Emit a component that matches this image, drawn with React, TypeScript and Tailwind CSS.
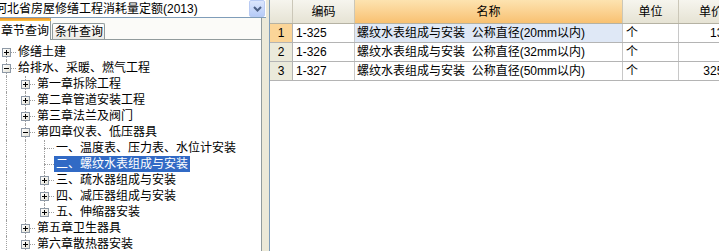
import React from "react";

type TreeNode = {
  label: string;
  open?: boolean;
  plus?: boolean;
  selected?: boolean;
  kids?: TreeNode[];
};

type FlatRow = {
  node: TreeNode;
  guides: boolean[];
  last: boolean;
  first: boolean;
};

const tree: TreeNode[] = [
  { label: "修缮土建", plus: true },
  {
    label: "给排水、采暖、燃气工程",
    open: true,
    kids: [
      { label: "第一章拆除工程", plus: true },
      { label: "第二章管道安装工程", plus: true },
      { label: "第三章法兰及阀门", plus: true },
      {
        label: "第四章仪表、低压器具",
        open: true,
        kids: [
          { label: "一、温度表、压力表、水位计安装" },
          { label: "二、螺纹水表组成与安装", selected: true },
          { label: "三、疏水器组成与安装", plus: true },
          { label: "四、减压器组成与安装", plus: true },
          { label: "五、伸缩器安装", plus: true },
        ],
      },
      { label: "第五章卫生器具", plus: true },
      { label: "第六章散热器安装", plus: true },
      { label: "第七章采暖工程", plus: true },
    ],
  },
  { label: "电气工程", plus: true },
];

const flatten = (nodes: TreeNode[], guides: boolean[], out: FlatRow[]) => {
  nodes.forEach((n, i) => {
    const last = i === nodes.length - 1;
    out.push({ node: n, guides, last, first: guides.length === 0 && i === 0 });
    if (n.open && n.kids) flatten(n.kids, [...guides, !last], out);
  });
  return out;
};

const rows = [
  { no: "1", code: "1-325", name: "螺纹水表组成与安装  公称直径(20mm以内)", unit: "个", price: "13.58" },
  { no: "2", code: "1-326", name: "螺纹水表组成与安装  公称直径(32mm以内)", unit: "个", price: "7.6" },
  { no: "3", code: "1-327", name: "螺纹水表组成与安装  公称直径(50mm以内)", unit: "个", price: "325.06" },
];

const font = "font-['Liberation_Sans','Noto_Sans_CJK_SC',sans-serif]";

const ToggleBox = ({ open }: { open: boolean }) => (
  <span className="absolute left-[5px] top-[4px] w-[9px] h-[9px] border border-[#8e99a6] bg-linear-to-br from-white to-[#e3e1d6]">
    <span className="absolute left-[1px] top-[3px] w-[5px] h-px bg-black" />
    {!open && <span className="absolute left-[3px] top-[1px] w-px h-[5px] bg-black" />}
  </span>
);

const TreeRow = ({ row }: { row: FlatRow }) => {
  const { node, guides, last, first } = row;
  const hasBox = node.plus || node.open;
  return (
    <div className="flex h-4 items-center ml-[-3px]">
      {guides.map((g, i) => (
        <div key={i} className="relative w-[19px] h-4 shrink-0">
          {g && <span className="absolute left-[9px] top-0 h-4 border-l border-dotted border-[#a0a0a0]" />}
        </div>
      ))}
      <div className="relative w-[19px] h-4 shrink-0">
        {!first && <span className="absolute left-[9px] top-0 h-2 border-l border-dotted border-[#a0a0a0]" />}
        {!last && <span className="absolute left-[9px] top-2 h-2 border-l border-dotted border-[#a0a0a0]" />}
        <span className="absolute left-[9px] top-2 w-[10px] border-t border-dotted border-[#a0a0a0]" />
        {hasBox && <ToggleBox open={!!node.open} />}
      </div>
      <span
        className={`px-[2px] leading-4 whitespace-nowrap ${
          node.selected ? "bg-[#316ac5] text-white" : "text-black"
        }`}
      >
        {node.label}
      </span>
    </div>
  );
};

const cols = [
  { w: "w-[62px]", title: "编码" },
  { w: "w-[268px]", title: "名称" },
  { w: "w-[56px]", title: "单位" },
  { w: "w-[65px]", title: "单价" },
];

export default function App() {
  const flat = flatten(tree, [], []);

  return (
    <div className={`w-[719px] h-[251px] overflow-hidden flex bg-[#ece9d8] text-[12px] ${font}`}>
      {/* Left: quota combo + chapter tree */}
      <div className="w-[266px] shrink-0 flex flex-col">
        <div className="h-[22px] bg-white border-b border-[#7f9db9] flex items-center justify-between">
          <span className="ml-[-5px] whitespace-nowrap leading-4 text-black">
            河北省房屋修缮工程消耗量定额(2013)
          </span>
          <span className="mr-[1px] w-[16px] h-[17px] rounded-[2px] border border-[#b9cbf3] bg-linear-to-b from-[#dbe6fc] to-[#b6cbf7] flex items-center justify-center">
            <svg width="9" height="6" viewBox="0 0 9 6">
              <path d="M1 1 L4.5 4.5 L8 1" stroke="#4d6185" strokeWidth="2" fill="none" />
            </svg>
          </span>
        </div>

        <div className="flex-1 flex">
          <div className="w-[262px] flex flex-col bg-[#fbfbf8] border-r border-[#919b9c]">
            <div className="h-[21px] flex items-end">
              <div className="relative z-10 ml-[-2px] mb-[-1px] w-[53px] h-[22px] border-x border-[#919b9c] bg-white flex flex-col">
                <div className="h-[3px] bg-linear-to-b from-[#e68b2c] to-[#ffc83c] -mx-px rounded-t-[2px]" />
                <div className="flex-1 flex items-center pl-[2px] leading-4 text-black">章节查询</div>
              </div>
              <div className="ml-[1px] w-[53px] h-[16px] border-x border-t border-[#919b9c] rounded-t-[2px] bg-linear-to-b from-white to-[#ecebe6] flex items-center pl-[2px] leading-4 text-black">
                条件查询
              </div>
            </div>
            <div className="flex-1 bg-white border-t border-[#919b9c] pt-[4px] overflow-hidden">
              {flat.map((r, i) => (
                <TreeRow key={i} row={r} />
              ))}
            </div>
          </div>
        </div>
      </div>

      {/* Right: quota items grid */}
      <div className="ml-[3px] flex-1 min-w-0 bg-white border-l border-[#7f9db9] overflow-hidden">
        <div className="flex h-[24px] border-b border-[#b5b2a3] w-max">
          <div className="w-[23px] shrink-0 border-r border-[#cbc7b8] bg-linear-to-b from-[#f6f5ee] to-[#e6e3d4]" />
          {cols.map((c) => (
            <div
              key={c.title}
              className={`${c.w} shrink-0 border-r border-[#cbc7b8] flex items-center justify-center text-black ${
                c.title === "名称"
                  ? "bg-linear-to-b from-[#fde3b0] to-[#f8c171]"
                  : "bg-linear-to-b from-[#f6f5ee] to-[#e6e3d4]"
              }`}
            >
              {c.title}
            </div>
          ))}
        </div>

        {rows.map((r, i) => (
          <div key={r.no} className="flex h-[19px] border-b border-[#b4b4b4] w-max text-black">
            <div
              className={`w-[23px] shrink-0 border-r border-[#b4b4b4] flex items-center justify-center ${
                i === 0 ? "bg-[#fbd598]" : "bg-[#ebeadb]"
              }`}
            >
              {r.no}
            </div>
            <div className="w-[62px] shrink-0 border-r border-[#c8c8c8] flex items-center pl-[3px]">{r.code}</div>
            <div
              className={`w-[268px] shrink-0 border-r border-[#c8c8c8] flex items-center pl-[2px] whitespace-pre ${
                i === 0 ? "bg-[#dfe8f6]" : ""
              }`}
            >
              {r.name}
            </div>
            <div className="w-[56px] shrink-0 border-r border-[#c8c8c8] flex items-center pl-[3px]">{r.unit}</div>
            <div className="w-[65px] shrink-0 border-r border-[#c8c8c8] flex items-center justify-end pr-[3px]">
              {r.price}
            </div>
          </div>
        ))}
      </div>
    </div>
  );
}
